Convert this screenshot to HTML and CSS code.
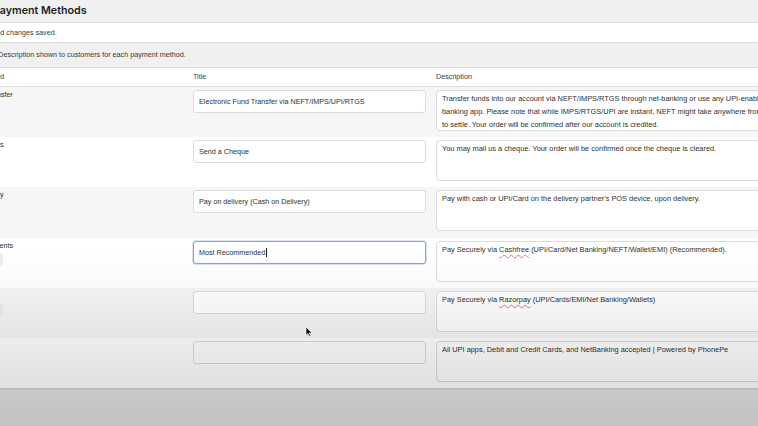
FILE: index.html
```html
<!DOCTYPE html>
<html lang="en">
<head>
    <meta charset="UTF-8">
    <title>Payment Methods</title>
    <link rel="stylesheet" href="styles.css">
</head>
<body>
    <div class="wrap">
        <h2 class="page-title">Payment Methods</h2>
        <div class="notice">Payment method changes saved.</div>
        <p class="hint">Enter Title and Description shown to customers for each payment method.</p>

        <div class="methods">
            <div class="methods-head">
                <div>Payment method</div>
                <div>Title</div>
                <div>Description</div>
            </div>

            <div class="method-row">
                <div class="method-name">Direct bank transfer</div>
                <div><input class="field" type="text" value="Electronic Fund Transfer via NEFT/IMPS/UPI/RTGS"></div>
                <div class="textbox">Transfer funds into our account via NEFT/IMPS/RTGS through net-banking or use any UPI-enabled<br>banking app. Please note that while IMPS/RTGS/UPI are instant, NEFT might take anywhere from 2 hours<br>to settle. Your order will be confirmed after our account is credited.</div>
            </div>

            <div class="method-row">
                <div class="method-name">Check payments</div>
                <div><input class="field" type="text" value="Send a Cheque"></div>
                <div class="textbox">You may mail us a cheque. Your order will be confirmed once the cheque is cleared.</div>
            </div>

            <div class="method-row">
                <div class="method-name">Cash on delivery</div>
                <div><input class="field" type="text" value="Pay on delivery (Cash on Delivery)"></div>
                <div class="textbox">Pay with cash or UPI/Card on the delivery partner's POS device, upon delivery.</div>
            </div>

            <div class="method-row">
                <div class="method-name">
                    Cashfree Payments
                    <span class="badge">Enabled</span>
                </div>
                <div class="field-wrap has-caret"><input class="field is-focused" type="text" value="Most Recommended"></div>
                <div class="textbox">Pay Securely via <span class="typo">Cashfree</span> (UPI/Card/Net Banking/NEFT/Wallet/EMI) (Recommended).</div>
            </div>

            <div class="method-row">
                <div class="method-name">
                    Razorpay
                    <span class="badge">Enabled</span>
                </div>
                <div><input class="field" type="text" value=""></div>
                <div class="textbox">Pay Securely via <span class="typo">Razorpay</span> (UPI/Cards/EMI/Net Banking/Wallets)</div>
            </div>

            <div class="method-row">
                <div class="method-name">PhonePe</div>
                <div><input class="field" type="text" value=""></div>
                <div class="textbox">All UPI apps, Debit and Credit Cards, and NetBanking accepted | Powered by PhonePe</div>
            </div>
        </div>
    </div>

    <!-- soft shading over the lower part of the screen -->
    <div class="shade"></div>

    <svg class="pointer" width="8" height="12" viewBox="0 0 8 12">
        <path d="M1 1 L1 9.4 L3 7.5 L4.4 10.6 L5.7 10 L4.3 7 L7 7 Z" fill="#111" stroke="#fff" stroke-width="0.6" stroke-linejoin="round"/>
    </svg>
</body>
</html>
```

FILE: styles.css
```css
/* Payment methods settings screen */
html, body {
    height: 100%;
    overflow: hidden;
}
body {
    margin: 0;
    background-color: #e8e8e8;
    font-family: "Liberation Sans", Arial, sans-serif;
    font-size: 7.2px;
    color: #2f2f2f;
}
.wrap {
    width: 900px;
    margin-left: -50px;
    background-color: #f0f0f0;
}
.page-title {
    margin: 0;
    height: 22px;
    line-height: 21px;
    padding-left: 43px;
    font-family: Inter, "Liberation Sans", sans-serif;
    font-size: 10.7px;
    font-weight: 600;
    color: #1e1e1e;
}
.notice {
    height: 19px;
    line-height: 19px;
    background-color: #fff;
    border-top: 1px solid #dcdcdc;
    border-bottom: 1px solid #dcdcdc;
    color: #3a3a3a;
}
.hint {
    margin: 0;
    height: 24px;
    line-height: 24px;
    color: #3a3a3a;
}

/* Table of methods */
.methods {
    background-color: #fff;
    border-top: 1px solid #dcdcdc;
    border-bottom: 2px solid #d4d4d4;
}
.methods-head,
.method-row {
    display: grid;
    grid-template-columns: 243px 243px 1fr;
}
.methods-head {
    height: 18px;
    line-height: 18px;
    border-bottom: 1px solid #dcdcdc;
    color: #3a3a3a;
}
.method-row {
    box-sizing: border-box;
    height: 50.2px;
    padding-top: 3px;
}
.method-row:nth-child(even) {
    background-color: #f6f6f6;
}
.method-name {
    line-height: 10px;
    color: #2a2a2a;
}
.badge {
    display: block;
    width: 53px;
    height: 13px;
    margin-top: 2px;
    border-radius: 4px;
    background-color: #ededed;
    color: #555;
    line-height: 13px;
    text-align: center;
}

/* Form controls */
.field {
    box-sizing: border-box;
    width: 233px;
    height: 23px;
    margin: 0;
    padding: 0 5px;
    border: 1px solid #dcdcdc;
    border-radius: 3px;
    background-color: #fff;
    font-family: inherit;
    font-size: 7.2px;
    color: #2f2f2f;
    outline: none;
}
.field.is-focused {
    border-color: #86a3dd;
    box-shadow: 0 0 0 0.8px rgba(134, 163, 221, 0.4);
}
.field-wrap {
    position: relative;
}
.has-caret::after {
    content: "";
    position: absolute;
    left: 73px;
    top: 7px;
    width: 0.8px;
    height: 9px;
    background-color: #1e1e1e;
}
.textbox {
    box-sizing: border-box;
    width: 420px;
    height: 41px;
    padding: 2px 5px;
    border: 1px solid #dcdcdc;
    border-radius: 4px;
    background-color: #fff;
    font-size: 7.4px;
    line-height: 12.8px;
    white-space: nowrap;
    overflow: hidden;
}
.typo {
    text-decoration: underline wavy rgba(214, 54, 56, 0.65);
    text-decoration-thickness: 0.4px;
    text-underline-offset: 1.5px;
}

/* Overlays */
.shade {
    position: fixed;
    left: 0;
    right: 0;
    top: 250px;
    bottom: 0;
    pointer-events: none;
    background: linear-gradient(to bottom,
        rgba(0, 0, 0, 0) 0,
        rgba(0, 0, 0, 0.025) 40px,
        rgba(0, 0, 0, 0.085) 105px,
        rgba(0, 0, 0, 0.12) 138px,
        rgba(0, 0, 0, 0.14) 145px,
        rgba(0, 0, 0, 0.155) 176px);
}
.pointer {
    position: fixed;
    left: 305px;
    top: 326px;
}
```
